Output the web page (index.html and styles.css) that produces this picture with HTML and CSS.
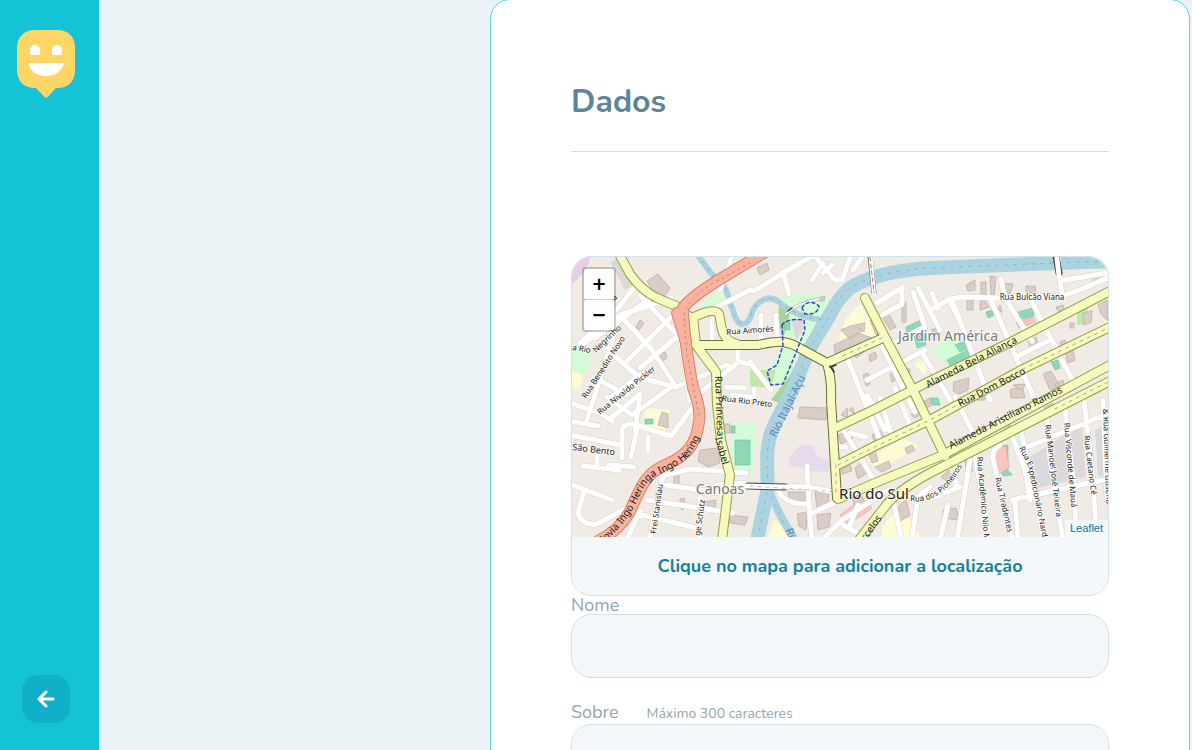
FILE: index.html
```html
<!DOCTYPE html>
<html lang="pt-BR">
<head>
<meta charset="utf-8">
<meta name="viewport" content="width=device-width, initial-scale=1">
<title>Dados</title>
<link rel="stylesheet" href="styles.css">
</head>
<body>
<div class="page">
  <aside class="sidebar">
    <svg class="logo" width="58" height="68" viewBox="0 0 58 68" role="img" aria-label="Logo">
      <path fill="#ffd666" d="M18 0h22c12 0 18 7 18 18v22c0 12-7 18-18 18h-1l-8.500 9q-1.500 1.500-3 0L19 58h-1C7 58 0 51 0 40V18C0 7 7 0 18 0z"/>
      <path fill="#fff" d="M13 25v-5a5 5 0 0 1 10 0v5zM35 25v-5a5 5 0 0 1 10 0v5zM13 33h32q2 0 1.500 2c-3 7-9 11-17.500 11s-14.500-4-17.500-11q-.5-2 1.500-2z"/>
    </svg>
    <button class="back" type="button" aria-label="Voltar">
      <svg width="24" height="24" viewBox="0 0 24 24" fill="none" stroke="#fff" stroke-width="3" stroke-linecap="round" stroke-linejoin="round"><path d="M19 12H5M12 19l-7-7 7-7"/></svg>
    </button>
  </aside>
  <main class="content">
    <form class="form">
      <fieldset class="group">
        <legend class="title">Dados</legend>
        <div class="map-card">
          <div class="map">
            <svg class="tiles" viewBox="572 257 536 280" preserveAspectRatio="xMidYMid slice" role="img" aria-label="Mapa de Rio do Sul">
              <defs>
                <path id="river" d="M1115 261L1030 264 930 268C885 271 862 280 850 288 835 301 833 310 828 318L810 348 793 388 773 428C767 442 766 455 768 488L757 540"/>
                <path id="stream" d="M697 254C707 268 708 270 717 280 729 287 727 298 733 310 738 331 749 325 751 315 756 300 769 294 779 302 790 312 806 318 823 320"/>
                <path id="branch" d="M768 488Q778 514 795 540"/>
                <path id="red" d="M765 252L717 281Q690 298 683 308C683 330 687 355 693 388 697 398 701 410 699 422 696 448 683 458 661 467 644 476 640 490 630 511Q620 530 598 541"/>
                <path id="redspur" d="M677 313Q681 326 686 342"/>
                <path id="pioneiros" d="M910 501Q944 506 966 458"/>
                <path id="expedicionario" d="M1019 448L1028 466 1045 550"/>
                <path id="hering" d="M602 545Q628 521 638 499 645 482 655 476 674 469 687 458 697 446 704 426"/>
                <g id="yellow">
                  <path d="M618 252L630 274Q642 291 657 298L681 308"/>
                  <path d="M681 309Q690 319 694 317Q714 307 719 314C722 323 719 340 737 344"/>
                  <path d="M693 317L696 345 716 372 717 405 721 440 730 475 722 540"/>
                  <path d="M865 298L885 337 913 390 945 456"/>
                  <path d="M837 427L875 409 930 381 1013 341 1112 290"/>
                  <path d="M838 465L875 446 930 420 1023 369 1112 326"/>
                  <path d="M838 499L875 483 943 455 1015 416 1112 364"/>
                  <path d="M858 541L884 508Q895 492 930 473L1112 380"/>
                </g>
                <path id="main" d="M696 345H758C778 341 786 339 803 350L827 363 847 354 883 338M827 363Q832 380 831 400L837 498"/>
                <g id="white">
                  <path d="M610 318L637 284M595 338L652 297M582 345L620 315 672 298M620 315L652 350 676 387M627 361L678 310M640 368L679 335M600 343L640 378 676 387M617 325L587 420M640 295L682 340M593 331L580 343M599 380L627 395M640 375L610 398M607 397L632 415 673 386"/>
                  <path d="M680 335L690 400M676 387L727 365M735 365L700 393M738 350V362L750 364M712 340V314M570 403L600 413 612 421M570 421L598 426M570 435L620 445M622 458V432Q622 423 633 424L671 436 698 400M631 457L638 425M648 437V450M609 465L634 467M640 394L611 418M640 395L635 430"/>
                  <path d="M570 484L612 500M584 491L578 513Q582 526 597 524L625 509M583 466L619 470M597 455V467M663 476L650 537M662 476L690 469 746 473M666 485L732 495M647 500L733 513M638 514L696 528M700 497V537M640 511L628 537M716 485L746 483M732 395L750 397M726 387L745 388M754 389V397"/>
                  <path d="M733 253L720 290M790 253L812 253 835 280 842 280 850 258M753 291Q765 285 780 275L802 262 815 255M783 272L789 294M812 280L823 263M823 273L832 265M853 270L862 257M750 290L715 308M761 315V345M776 315L777 341M750 362L771 390"/>
                  <path d="M877 303L903 287M882 315L902 304 902 288M913 292L924 324M918 288L940 330M952 300L990 400M932 293L938 308M930 310L950 299 962 297 1000 298 1062 296M949 299L959 320M990 298L1035 400M1001 279L1005 298 1032 341M1058 258L1062 296 1082 289 1112 276M1060 281L1112 272M1030 298L1075 385M890 345L925 327M922 352L950 400M846 355L882 445M880 342L915 412M867 380L925 350M867 395L885 430M843 429L872 477M850 433L866 437M880 398L892 437M895 388L910 425M836 447H846M1020 355L1050 340M955 397L978 443"/>
                  <path d="M757 486L808 487 840 493M807 466L810 520 812 540M778 490Q785 505 808 504M810 514L855 493M822 540L842 520 888 490M858 505L850 525M843 525L870 540M893 500L902 540M912 540L918 497 930 487M923 473L933 475M935 497L960 487M956 463V487M974 450L990 540M1000 445Q990 450 994 463L1012 540M1011 433L1025 470 1030 500M1021 430L1044 540M1025 448L1112 412M1012 500L1112 478M1015 500L1018 540M1047 417L1050 460 1063 540M1065 410L1073 480 1077 540M1084 401L1092 470 1097 540M1103 400L1107 500M970 460L957 540M940 540L948 505"/>
                </g>
              </defs>
              <rect class="land" x="540" y="230" width="600" height="340"/>
              <path fill="#e5cfe5" d="M572 257H591Q586 274 572 284z"/>
              <path fill="#ddd9db" d="M1025 460L1082 424 1086 477 1034 489zM610 262L625 290 635 284 618 257zM1095 430L1108 423V475L1098 477z"/>
              <path fill="#e8daed" d="M788 460L799 446 812 445 817 456 832 462 828 472 812 471 790 466z"/>
              <path fill="#fdfdd5" d="M645 408L670 410 666 430 644 425zM860 304L878 335 835 353 845 320zM868 460L903 438 918 446 880 471zM882 527L893 514 910 520 920 537H882zM767 540L774 520 781 525 790 540zM572 372L583 375 580 390 572 388zM915 365L930 355 925 375zM1040 355L1050 350 1050 360z"/>
              <path fill="#d2fbd6" d="M571 344L592 351 586 375 571 370zM779 300L790 293 826 293 833 302 825 320 800 345 788 382 770 385 768 370 786 343zM731 424L758 423 752 474 733 472zM703 300L726 290 731 303 704 310zM930 350L950 335 972 345 955 372zM1012 430L1020 428 1023 444 1018 446z"/>
              <path fill="#ddd9db" d="M791 320L804 319 803 331 796 340z"/>
              <path fill="#c2e6ac" d="M750 370L776 370 770 388 750 386zM1077 309L1088 302 1087 324 1077 325zM1093 277L1100 276 1099 281 1092 282zM993 470L1005 446 1000 442z"/>
              <path fill="#a5d49c" d="M818 320L825 316 783 404 771 400 790 375zM779 305L790 313 783 340 778 320zM724 285L732 298 728 302z"/>
              <path fill="#8ed8b8" stroke="#6cbfa0" stroke-width=".6" d="M735 440H750V465H735zM731 426H735V433H731zM906 327L921 320 926 345 917 348 914 335 907 337zM947 360L968 350 970 358 952 369zM955 345L967 340 971 347 960 352zM1018 312L1033 308 1034 316 1021 319zM986 312L993 310 995 315 988 318zM1051 362L1058 360 1060 368 1055 370zM785 322H790V330H785zM645 419H653V424H645zM930 398H938L940 405H932zM995 447L1008 445 1008 470 1012 475 1003 476z"/>
              <path fill="#fac4c0" stroke="#e5a4a0" stroke-width=".6" d="M993 448L1006 446 1009 468 998 475 995 460zM840 515L860 500 872 508 848 525zM1016 322L1033 317 1036 322 1019 328z"/>
              <path class="building" d="M647 281L658 274 670 288 664 297 655 295zM659 354L665 352 667 358 662 361zM640 320L644 323 639 330 636 327zM662 412L668 414 668 428 658 425zM757 268L767 263 769 270 760 275zM800 407L827 408 826 420 798 418zM700 450L718 448 720 463 708 467 698 461zM720 424H730V433H719zM674 474H679V486H674zM704 502L716 500 715 512 704 510zM680 499L684 498 685 503 683 510 681 509zM728 515L748 517 745 525 730 523zM834 345L858 333 872 338 835 354zM841 330L853 325 862 331 850 339zM855 325L865 323 864 332zM870 320L878 318 884 332 876 335zM882 316L888 313 896 327 890 330zM902 302H906V322H902zM841 352H847V360H841zM855 350L862 345 864 352 856 358zM869 355L875 352 877 358 870 362zM863 375L868 373 870 384 866 386zM890 374L898 371 899 378 892 382zM904 369H910V374H904z"/>
              <path class="building" d="M966 285L975 280 975 290 968 291zM967 300H973V310H967zM981 282H986V295H981zM990 276L996 277 994 295 991 295zM1004 283L1013 284 1010 294H1005zM1026 286H1035L1036 293H1026zM980 301L985 300 989 307 980 310zM1000 305L1002 313 998 309zM931 330L941 326 940 335zM954 382L969 378 968 390 959 394 953 391zM1028 340L1036 337 1038 344 1030 348zM1043 374L1051 371 1060 386 1050 390zM1055 384L1063 380 1065 388 1058 391zM1098 305L1107 300 1108 321 1101 314zM1083 313L1092 311 1091 322 1084 325zM1060 342L1065 340 1067 347 1062 349zM1070 323L1074 323 1074 328H1070zM1056 307L1063 305 1065 311H1058zM1065 352L1073 350 1075 360 1068 363zM1010 390L1022 386 1025 398H1011zM975 390H985V400H975z"/>
              <path class="building" d="M841 415L847 408 848 418zM849 410L853 407 854 414zM880 402L887 399 889 405 882 408zM911 414L917 411 919 416 914 418zM917 405L930 398 932 405 920 411zM838 435L850 430 853 438 841 444zM872 435L880 430 884 437 875 443zM841 467L850 463 852 471 842 474zM855 468L862 462 867 473 858 479zM875 467L889 461 891 467 882 472zM868 451L874 448 878 461 872 463zM905 448L912 445 915 450 907 454zM797 514L807 512 806 530 799 526zM788 492H805V501H790zM815 492L829 492 828 505 817 508zM817 515L831 513 829 527 818 530zM852 497L861 494 866 505 856 510zM941 477L949 470 950 484zM965 457H972V472H966zM943 510L956 508 959 520 943 518zM898 507L906 500 910 515 899 522zM1044 408L1053 403 1055 412 1046 415zM1001 432L1010 425 1012 435 1003 439zM1013 385L1025 384 1022 391z"/>
              <g class="line water"><use href="#river" stroke-width="14"/><use href="#branch" stroke-width="8"/><use href="#stream" stroke-width="6"/></g>
              <g class="line flow"><use href="#river"/><use href="#branch"/><use href="#stream"/></g>
              <g class="line" stroke="#d6d1cb" stroke-width="6"><use href="#white"/></g>
              <g class="line" stroke="#fff" stroke-width="5"><use href="#white"/></g>
              <path class="line" stroke="#999" stroke-width="3" d="M786 314Q797 303 819 299"/>
              <path class="line" stroke="#fff" stroke-width="2" d="M786 314Q797 303 819 299"/>
              <path class="building" d="M821 297L825 296 824 301 820 301z"/>
              <path class="line" stroke="#444" stroke-width="7" d="M748 486L785 487M1056 256L1059 273"/>
              <path class="line" stroke="#fff" stroke-width="5" d="M744 486L788 487M1056 250L1059 276"/>
              <path class="line" stroke="#777" stroke-width="5" d="M870 256L874 293"/>
              <path class="line" stroke="#fff" stroke-width="4" d="M870 250L874 294"/>
              <path class="line" stroke="#b57c74" stroke-dasharray="4 3" d="M870 257L874 293"/>
              <path class="line" stroke="#bbb" stroke-dasharray="3 5" d="M750 486L840 492"/>
              <g class="line" stroke="#92a044" stroke-width="10"><use href="#yellow"/></g>
              <use class="line" href="#main" stroke="#6c7038" stroke-width="10"/>
              <g class="line" stroke="#f7fabf" stroke-width="8"><use href="#yellow"/><use href="#main"/></g>
              <path class="line" stroke="#aaa98a" stroke-dasharray="3 5" d="M838 465L930 420 1023 369 1108 328M836 465V492M1055 409L1108 382M720 385V430M882 338L840 357"/>
              <g class="line" stroke="#d98070" stroke-width="12"><use href="#red"/><use href="#redspur"/></g>
              <g class="line" stroke="#f9b29c" stroke-width="10"><use href="#red"/><use href="#redspur"/></g>
              <path class="line" stroke="#a98f87" stroke-dasharray="2 4" d="M750 263L710 285Q687 300 684 315L687 355 699 415"/>
              <path class="line" stroke="#3744c9" stroke-width="1.500" stroke-dasharray="3 3" d="M802 308Q808 298 819 306 818 315 805 314zM782 325Q787 318 804 320L805 330 795 355 783 384 771 385 767 371 777 365 783 345z"/>
              <path class="line" stroke="#333" stroke-width="1.500" d="M830 367L836 365M830 366L834 372M788 311L792 308"/>
              <g class="labels">
                <text x="750" y="333" text-anchor="middle" transform="rotate(-4 750 330)">Rua Aimorés</text>
                <text x="1032" y="300" text-anchor="middle">Rua Bulcão Viana</text>
                <text x="747" y="404" text-anchor="middle" transform="rotate(7 747 402)">Rua Rio Preto</text>
                <text x="572" y="350" transform="rotate(9 572 350)">a Rio</text>
                <text x="596" y="353" transform="rotate(-44 596 353)">Negrinho</text>
                <text x="615" y="301" transform="rotate(-48 615 301)">a</text>
                <text x="586" y="399" transform="rotate(-57 586 399)">Rua Benedito Novo</text>
                <text x="600" y="415" transform="rotate(-39 600 415)">Rua Nivaldo Pickler</text>
                <text class="street" x="572" y="450" transform="rotate(7 572 450)">São Bento</text>
                <text x="656" y="534" transform="rotate(-82 656 534)">Frei Stanislau</text>
                <text x="700" y="536" transform="rotate(-82 700 536)">ge Schütz</text>
                <text><textPath href="#pioneiros">Rua dos Pioneiros</textPath></text>
                <text x="977" y="457" transform="rotate(85 977 457)">Rua Acadêmico Nilo M</text>
                <text x="995" y="478" transform="rotate(77 995 478)">Rua Tiradentes</text>
                <text><textPath href="#expedicionario">Rua Expedicionário Nard</textPath></text>
                <text x="1045" y="425" transform="rotate(83 1045 425)">Rua Manoel José Teixeira</text>
                <text x="1064" y="423" transform="rotate(85 1064 423)">Rua Visconde de Mauá</text>
                <text x="1084" y="436" transform="rotate(83 1084 436)">Rua Caetano Cé</text>
                <text x="1103" y="409" transform="rotate(88 1103 409)">&amp; Rua Guilherme Gusenb</text>
              </g>
              <g class="labels labels-big">
                <text x="928" y="388" transform="rotate(-27 928 388)">Alameda Bela Aliança</text>
                <text x="960" y="407" transform="rotate(-27 960 407)">Rua Dom Bosco</text>
                <text x="951" y="449" transform="rotate(-27 951 449)">Alameda Aristiliano Ramos</text>
                <text x="715" y="376" transform="rotate(88 715 376)">Rua Princesa</text>
                <text x="715" y="438" transform="rotate(74 715 438)">Isabel</text>
                <text><textPath href="#hering">dovia Ingo Heringa Ingo Hering</textPath></text>
                <text x="866" y="541" transform="rotate(-55 866 541)">rcelos</text>
              </g>
              <g class="labels labels-water">
                <text x="776" y="438" transform="rotate(-64 776 438)">Rio Itajaí-Açu</text>
                <text x="785" y="530" transform="rotate(68 785 530)">Ri</text>
              </g>
              <g class="labels labels-place">
                <text x="948" y="341" text-anchor="middle">Jardim América</text>
                <text x="720" y="494" text-anchor="middle">Canoas</text>
                <text class="city" x="874" y="499" text-anchor="middle">Rio do Sul</text>
              </g>
            </svg>
            <div class="zoom">
              <button class="zoom-btn" type="button" aria-label="Aproximar">+</button>
              <button class="zoom-btn" type="button" aria-label="Afastar">−</button>
            </div>
            <div class="credit"><a class="credit-link" href="#leaflet">Leaflet</a></div>
          </div>
          <div class="map-footer">Clique no mapa para adicionar a localização</div>
        </div>
        <div class="field">
          <label class="label" for="name">Nome</label>
          <input class="control" id="name" type="text">
        </div>
        <div class="field">
          <label class="label" for="about">Sobre <span class="hint">Máximo 300 caracteres</span></label>
          <textarea class="control area" id="about" maxlength="300"></textarea>
        </div>
      </fieldset>
    </form>
  </main>
</div>
</body>
</html>
```
FILE: styles.css
```css
* { box-sizing: border-box; margin: 0; padding: 0; }
body {
  background: #ebf2f5;
  color: #8fa7b3;
  font-family: Nunito, Lato, sans-serif;
  font-size: 18px;
}
.page { display: flex; min-height: 100vh; }
.sidebar {
  position: sticky;
  top: 0;
  flex: none;
  display: flex;
  flex-direction: column;
  justify-content: space-between;
  align-items: center;
  width: 99px;
  height: 100vh;
  padding: 30px 7px 27px 0;
  background: #15c3d6;
}
.back {
  display: grid;
  place-items: center;
  width: 48px;
  height: 48px;
  border: 0;
  border-radius: 16px;
  background: #12afcb;
  cursor: pointer;
}
.content {
  flex: 1;
  display: flex;
  justify-content: flex-end;
  min-width: 0;
  margin-top: -1px;
  padding-right: 2px;
}
.form {
  width: 100%;
  max-width: 700px;
  padding: 80px;
  border: 1px solid #5cd6d6;
  border-radius: 20px;
  background: #fff;
}
.group { min-width: 0; border: 0; }
.title {
  display: block;
  width: 100%;
  margin-bottom: 104px;
  padding-bottom: 27px;
  border-bottom: 1px solid #d3e2e5;
  color: #5c8599;
  font-size: 32px;
  font-weight: 700;
  line-height: 44px;
}
.map-card {
  overflow: hidden;
  border: 1px solid #d3e2e9;
  border-radius: 20px;
  background: #f5f8fa;
}
.map { position: relative; height: 280px; overflow: hidden; border-radius: 20px 20px 0 0; }
.tiles { display: block; width: 100%; height: 100%; }
.map-footer {
  color: #15829b;
  font-weight: 700;
  line-height: 58px;
  text-align: center;
}
.zoom {
  position: absolute;
  top: 10px;
  left: 10px;
  display: grid;
  gap: 1px;
  border: 2px solid rgba(0, 0, 0, .2);
  border-radius: 4px;
  background: #ccc;
  background-clip: padding-box;
}
.zoom-btn {
  width: 30px;
  height: 30px;
  border: 0;
  border-radius: 2px;
  background: #fff;
  color: #000;
  font: 700 18px/30px "DejaVu Sans", sans-serif;
}
.credit {
  position: absolute;
  right: 0;
  bottom: 0;
  padding: 0 5px;
  background: rgba(245, 250, 252, .8);
  font: 11px/17px "Liberation Sans", sans-serif;
}
.credit-link { color: #0078a8; text-decoration: none; }
.field + .field { margin-top: 24px; }
.label { display: flex; align-items: baseline; gap: 28px; line-height: 18px; }
.field + .field .label { line-height: 20px; }
.hint { font-size: 14px; }
.control {
  display: block;
  width: 100%;
  height: 64px;
  padding: 0 24px;
  border: 1px solid #d3e2e9;
  border-radius: 20px;
  background: #f3f7fa;
  color: #5c8599;
  font: inherit;
  outline: 0;
}
.area { height: 120px; padding: 16px 24px; resize: none; }

.land { fill: #f0ece5; }
.line { fill: none; stroke-linecap: round; stroke-linejoin: round; }
.water { stroke: #aad3df; }
.flow { stroke: #86afc8; stroke-dasharray: 2 7; }
.building { fill: #d9cdc5; stroke: #c6b8ae; stroke-width: 1px; }
.labels {
  fill: #222;
  stroke: rgba(255, 255, 255, .7);
  stroke-width: 2px;
  paint-order: stroke;
  font: 8px "Noto Sans", sans-serif;
}
.street { font-size: 9px; }
.labels-big { font-size: 10px; stroke: none; }
.labels-water { fill: #5b86b8; stroke: none; font-size: 11px; }
.labels-place { fill: #777; font-size: 14px; }
.city { fill: #222; font-size: 15px; }
```
